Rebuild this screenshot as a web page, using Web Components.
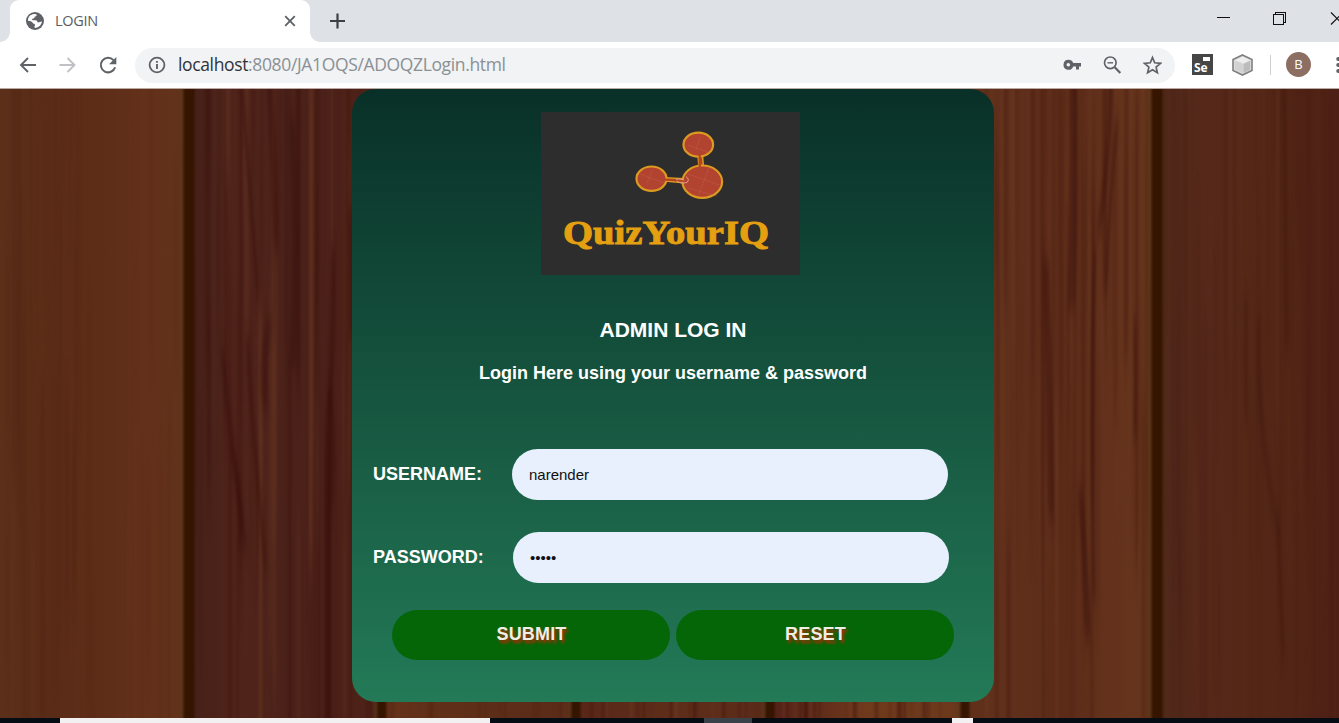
<!DOCTYPE html>
<html lang="en">
<head>
<meta charset="utf-8">
<title>LOGIN</title>
<style>
html,body{margin:0;height:100%;overflow:hidden}
body{font-family:"Liberation Sans",Arial,sans-serif}
</style>
</head>
<body>
<browser-window></browser-window>
<script>
function define(name, html, setup){
  const t=document.createElement('template');
  t.innerHTML=html;
  customElements.define(name, class extends HTMLElement{
    constructor(){
      super();
      this.attachShadow({mode:'open'}).appendChild(t.content.cloneNode(true));
      if(setup) setup(this.shadowRoot,this);
    }
  });
}

define('tab-strip',`
<style>
:host{display:flex;height:42px;background:#dee1e6;overflow:hidden;font-family:"Open Sans","Noto Sans",sans-serif}
svg{display:block;flex:none}
.foot{width:10px;height:42px;background:radial-gradient(circle at 0 0,#dee1e6 9.5px,#fff 10.2px) 0 32px/10px 10px no-repeat}
.foot.r{background:radial-gradient(circle at 100% 0,#dee1e6 9.5px,#fff 10.2px) 0 32px/10px 10px no-repeat}
.tab{box-sizing:border-box;width:300px;height:42px;background:#fff;border-radius:9px 9px 0 0;display:flex;align-items:center;padding:0 13px 0 16px}
.title{margin-left:11px;font-size:14.5px;line-height:20px;letter-spacing:-.3px;color:#5a5d61;flex:1}
.plus{margin:13px 0 0 10px}
.win{margin-left:auto;display:flex;padding-top:11px;width:122px;flex:none;gap:42px}
</style>
<div class="foot"></div>
<div class="tab">
 <svg width="18" height="18" viewBox="0 0 18 18"><circle cx="9" cy="9" r="9" fill="#5f6368"/><path fill="#fff" d="M2 8.800C1.800 5 4.500 2.300 8 2c1.800-.1 2.800.4 2.600 1.400-.2 1-1 .8-1.800 1.200-.5.400.2 1.600-1.200 1.900-1 .1-1.500.3-1.500 1.200.4.700 2 .4 3.400.5 2 .1 1.500 1.900 2.500 2.200 1.200.1 2.500-.9 3.900-.8-.2 3.300-3.100 6-6.400 6.300-1.400 0-1.600-1.300-.6-1.800.6-1.900-.5-2.300-1.800-2.600C6.300 9.600 4.800 8.800 2 8.800z"/></svg>
 <span class="title">LOGIN</span>
 <svg width="14" height="14" viewBox="0 0 14 14"><path d="M2.200 2.200l9.600 9.600M11.800 2.200l-9.600 9.600" stroke="#5f6368" stroke-width="1.900"/></svg>
</div>
<div class="foot r"></div>
<svg class="plus" width="16" height="16" viewBox="0 0 16 16"><path d="M7.500 .5v15M0 8h15" stroke="#3c4043" stroke-width="2.200"/></svg>
<div class="win">
 <svg width="14" height="16" shape-rendering="crispEdges"><path d="M0 6.500h13" stroke="#111"/></svg>
 <svg width="14" height="16" shape-rendering="crispEdges" fill="none" stroke="#111"><rect x=".5" y="3.500" width="10" height="10"/><path d="M2.500 3V1.500h10v10h-2"/></svg>
 <svg width="14" height="16" fill="none" stroke="#111" stroke-width="1.200"><path d="M2 1.500l12 12M2 13.500l12-12"/></svg>
</div>`);

define('address-bar',`
<style>
:host{display:flex;align-items:center;width:1040px;height:35px;box-sizing:border-box;border-radius:18px;background:#f1f3f4;padding:0 13px 0 13px;flex:none;font-family:"Open Sans","Noto Sans",sans-serif}
svg{display:block;flex:none}
.url{margin:-2px 0 0 12px;flex:1;font-size:17.5px;line-height:26px;letter-spacing:-.36px;color:#8b9094;white-space:nowrap}
b{font-weight:400;color:#303236}
.tools{display:flex;gap:20px;align-items:center;margin-top:-1px}
</style>
<svg width="18" height="18" fill="none" stroke="#5f6368" stroke-width="1.800"><circle cx="9" cy="9" r="7.400"/><path d="M9 8v5M9 5v1.800" stroke-width="1.900"/></svg>
<span class="url"><b>localhost</b>:8080/JA1OQS/ADOQZLogin.html</span>
<div class="tools">
<svg width="20" height="20"><path fill="#5f6368" fill-rule="evenodd" d="M6.500 4.800a5 5 0 1 0 4.700 6.700h2.800v3h3v-3h2V8h-7.800a5 5 0 0 0-4.700-3.200zm-.2 3.200a1.800 1.800 0 1 1 0 3.600 1.800 1.800 0 0 1 0-3.600z"/></svg>
<svg width="20" height="20" fill="none" stroke="#5f6368" stroke-width="1.700"><circle cx="8.300" cy="7.800" r="5.800"/><path d="M12.500 12l5.800 6" stroke-width="2.200"/><path d="M5.500 7.800h5.600" stroke-width="1.400"/></svg>
<svg width="20" height="20" fill="none" stroke="#5f6368" stroke-width="1.700"><path d="M10.500 2.500l2.200 5.300 5.800.5-4.400 3.800 1.300 5.600-4.900-3-4.900 3 1.300-5.600-4.400-3.800 5.800-.5z"/></svg>
</div>`);

define('tool-bar',`
<style>
:host{display:flex;height:46px;align-items:center;background:#fff;border-bottom:1px solid #b9aaa5;overflow:hidden;padding-left:18px}
svg{display:block;flex:none}
.nav{display:flex;gap:20px;width:117px;flex:none}
.ext{display:flex;align-items:center;margin:-1px 0 0 17px;flex:none}
.se{box-sizing:border-box;width:21px;height:21px;background:#464646 linear-gradient(#fff,#fff) 11px 3px/7px 4px no-repeat;color:#fff;font:700 12px/13px "Open Sans",sans-serif;letter-spacing:-.2px;padding:7px 0 0 2px}
.cube{margin-left:19px}
.sep{width:1px;height:20px;background:#cfd1d4;margin:0 15px 0 17px}
.av{width:25px;height:25px;border-radius:50%;background:#8d6e63;color:#fff;font:13px/25px "Open Sans",sans-serif;text-align:center;margin-right:25px}
</style>
<div class="nav">
<svg width="20" height="20" fill="none" stroke="#5f6368" stroke-width="1.900"><path d="M18 10H3M10 3l-7 7 7 7"/></svg>
<svg width="20" height="20" fill="none" stroke="#bfc1c4" stroke-width="1.900"><path d="M1.500 10H16.500M9.500 3l7 7-7 7"/></svg>
<svg width="20" height="20"><path d="M15.500 5.100A7.300 7.300 0 1 0 17.100 12.200" fill="none" stroke="#5f6368" stroke-width="2"/><path d="M18.300 2v7.200h-7.200z" fill="#5f6368"/></svg>
</div>
<address-bar></address-bar>
<div class="ext">
<div class="se">Se</div>
<svg class="cube" width="21" height="22"><path d="M10.500 1l9.500 4.500v11L10.500 21 1 16.500v-11z" fill="#ddd" stroke="#808080" stroke-width="1.600"/><path d="M3 6.200l7.500-3.500L18 6.200l-7 3z" fill="#eee"/><path d="M11.500 10l6.700-3.300v9l-6.700 3.300z" fill="#bcbcbc"/><path d="M3 6.700l8 3.300v9l-8-3.800z" fill="#d2d2d2"/></svg>
<div class="sep"></div><div class="av">B</div>
<svg width="5" height="20" fill="#5f6368"><circle cx="2.200" cy="4" r="2"/><circle cx="2.200" cy="10" r="2"/><circle cx="2.200" cy="16" r="2"/></svg>
</div>`);

/* Wooden planks: a base gradient per board, fine seeded grain, a few knots and dark seams. */
define('wood-wall',`
<style>
:host{display:flex;height:629px;overflow:hidden;background:#592a17;position:relative}
svg{position:absolute;left:0;top:0}
slot{display:block}
::slotted(*){position:relative;margin-left:352px}
</style>
<svg width="1339" height="629"><defs>
<filter id="f" filterUnits="userSpaceOnUse" x="-20" y="-60" width="1380" height="750" color-interpolation-filters="sRGB"><feGaussianBlur stdDeviation="1 22"/></filter>
<filter id="k" filterUnits="userSpaceOnUse" x="-20" y="-60" width="1380" height="750" color-interpolation-filters="sRGB"><feGaussianBlur stdDeviation="1.3 10"/></filter>
<filter id="s" filterUnits="userSpaceOnUse" x="-20" y="-60" width="1380" height="750" color-interpolation-filters="sRGB"><feGaussianBlur stdDeviation="1 0"/></filter></defs>
<g id="base"></g><g id="grain" filter="url(#f)"></g><g id="knots" filter="url(#k)"></g><g id="seams" filter="url(#s)"></g></svg>
<slot></slot>`, root=>{
  let s=7; const rnd=()=>(s=(s*16807)%2147483647)/2147483647;
  const boards=[[0,189,['#5b2f19','#5a2c17','#5d2d18','#63301a','#62331a'],.22],[189,382,['#452019','#50241a','#4b221a','#4b2018','#502317'],.62],
    [382,576,['#653219','#5d2e18','#5b2b18'],.4],[576,770,['#592718','#5f2e1a','#5b2b19'],.7],[770,965,['#532018','#703a1c','#6b381c'],.8],
    [965,1157,['#60301b','#60301c','#5b2b18','#64321c','#67361c'],.52],[1157,1339,['#4e2819','#55281a','#542717','#522516','#4e2015'],.22]];
  let base='',grain='',knots='',seams='';
  boards.forEach(([a,b,c,k],i)=>{
    base+=`<linearGradient id="b${i}">${c.map((v,j)=>`<stop offset="${j/(c.length-1)}" stop-color="${v}"/>`).join('')}</linearGradient><rect x="${a}" y="0" width="${b-a}" height="629" fill="url(#b${i})"/>`;
    for(let n=0;n<80;n++){
      const x=a+6+rnd()*(b-a-12),y=rnd()<.45?-60:rnd()*500,h=130+rnd()*420,w=1+rnd()*3.5,dark=rnd()<.6;
      if(i===0&&x>92&&rnd()<.7) continue;
      grain+=`<rect x="${x.toFixed(1)}" y="${y.toFixed(0)}" width="${w.toFixed(1)}" height="${h.toFixed(0)}" fill="${dark?'#350c07':'#744128'}" opacity="${(k*(.14+rnd()*.38)).toFixed(2)}"/>`;
    }
  });
  const dark=[[239,-35,248,70,258,210,5],[268,-35,274,50,276,160,8],[292,30,297,120,293,280,7],[248,250,250,320,266,480,5],[270,230,260,280,266,320,9],[333,160,335,240,329,330,6],[222,260,228,330,246,460,6],[232,360,243,410,240,460,6],[330,300,335,360,330,420,7],[350,120,352,180,351,250,7],
    [1110,-35,1113,50,1098,145,6],[1118,30,1110,90,1106,200,4],[1073,-35,1075,120,1071,220,10],[1046,170,1050,290,1051,430,8],[1095,160,1090,300,1094,510,4],[1080,400,1086,470,1088,550,7],[1135,230,1136,290,1135,350,4],
    [1259,230,1255,330,1278,440,5],[1246,210,1245,260,1246,330,4],[1284,-30,1286,120,1287,260,6],[1278,430,1279,480,1284,570,4]];
  dark.forEach(p=>knots+=`<path d="M${p[0]} ${p[1]}Q${p[2]} ${p[3]} ${p[4]} ${p[5]}" fill="none" stroke="#380f0a" stroke-width="${p[6]*.8}" opacity="${p[0]>1200?.3:.45}"/>`);
  [[189,11],[382,9],[576,9],[770,9],[965,9],[1157,11]].forEach(([x,w])=>seams+=`<rect x="${x-w/2-4}" y="-5" width="4" height="640" fill="#58381d" opacity=".6"/><rect x="${x-w/2}" y="-5" width="${w}" height="640" fill="#351400"/>`);
  for(const [id,m] of Object.entries({base,grain,knots,seams})) root.getElementById(id).innerHTML=m;
});

define('quiz-logo',`
<style>:host{display:block;width:259px;height:163px}svg{display:block}</style>
<svg width="259" height="163" viewBox="541 112 259 163">
<rect x="541" y="112" width="259" height="163" fill="#2d2d2d"/>
<g fill="#b24330" stroke="#dc9a20" stroke-width="2.200">
<path d="M698 155h4.500l1 13h-4.500zM665 177.800l18 .8v4l-18-1.600z" stroke-width="1.500"/>
<ellipse cx="698.300" cy="144.700" rx="14.800" ry="12"/><ellipse cx="651.500" cy="178.700" rx="15" ry="12.200"/><ellipse cx="702.300" cy="181.700" rx="19.800" ry="16.200"/></g>
<path d="M699.700 154v14M664 179.500l20 1.300" stroke="#b5451f" stroke-width="2.200"/>
<path d="M676 180q1-2 8 0M677 181q3 3 10 1.500 3-3-1-6" fill="none" stroke="#dfa08c" stroke-width="1"/>
<g fill="none" stroke="#c16f58" stroke-width=".6" opacity=".5"><path d="M688 145l22 8M696 150l4-13M640 174l24 9M647 183l5-12M688 188l29 8M688 174l31 11M698 196l11-28"/></g>
<text x="563" y="244" font-family="Liberation Serif" font-weight="700" font-size="33" fill="#e4a010" stroke="#e4a010" stroke-width=".9" textLength="206" lengthAdjust="spacingAndGlyphs">QuizYourIQ</text>
</svg>`);

define('form-field',`
<style>
:host{display:flex;align-items:center;height:51px}
label{font-weight:700;font-size:18px;line-height:20px;color:#fff;width:var(--label,139px);flex:none;padding-bottom:2px;box-sizing:border-box}
input{box-sizing:border-box;width:436px;height:51px;border:0;border-radius:25.500px;background:#e8f0fe;padding:0 17px 1px;font:15px "Liberation Sans",Arial,sans-serif;color:#111;outline:0}
</style>
<label><slot></slot></label><input>`,(root,el)=>{
  const i=root.querySelector('input'); i.type=el.getAttribute('type')||'text'; i.value=el.getAttribute('value')||'';
});

define('pill-button',`
<style>
:host{display:block;width:278px;height:50px}
button{display:block;width:100%;height:100%;border:0;border-radius:25px;background:#056608;color:#f0eee5;font:700 18px "Liberation Sans",Arial,sans-serif;letter-spacing:.15px;padding:0 0 1px 1px;text-shadow:2px 3px 3px #b82806}
</style><button><slot></slot></button>`);

define('login-card',`
<style>
:host{display:block;box-sizing:border-box;width:642px;height:613px;border-radius:24px;background:linear-gradient(#093028,#237a57);padding-top:23px;color:#fff}
quiz-logo{margin-left:189px}
h1{font-size:21px;line-height:24px;margin:43px 0 0;text-align:center}
p{font-weight:700;font-size:18px;line-height:20px;margin:21px 0 0;text-align:center}
form{margin:0}
.u{margin:66px 0 0 21px}
.p{margin:32px 0 0 21px;--label:140px}
.buttons{display:flex;gap:6px;margin:27px 0 0 40px}
</style>
<quiz-logo></quiz-logo><h1>ADMIN LOG IN</h1><p>Login Here using your username &amp; password</p>
<form><form-field class="u" value="narender">USERNAME:</form-field><form-field class="p" type="password" value="admin">PASSWORD:</form-field>
<div class="buttons"><pill-button>SUBMIT</pill-button><pill-button>RESET</pill-button></div></form>`);

define('task-bar',`
<style>:host{display:flex;height:5px;background:#050c14}
i{display:block;height:5px}.s{margin-left:60px;width:430px;background:#f2f0f1}.a{margin-left:214px;width:48px;background:#3b4148}.b{margin-left:200px;width:21px;background:#f2f0f1}</style>
<i class="s"></i><i class="a"></i><i class="b"></i>`);

define('browser-window',`
<style>:host{display:flex;flex-direction:column;width:1339px;height:723px;overflow:hidden}</style>
<tab-strip></tab-strip><tool-bar></tool-bar><wood-wall><login-card></login-card></wood-wall><task-bar></task-bar>`);
</script>
</body>
</html>
